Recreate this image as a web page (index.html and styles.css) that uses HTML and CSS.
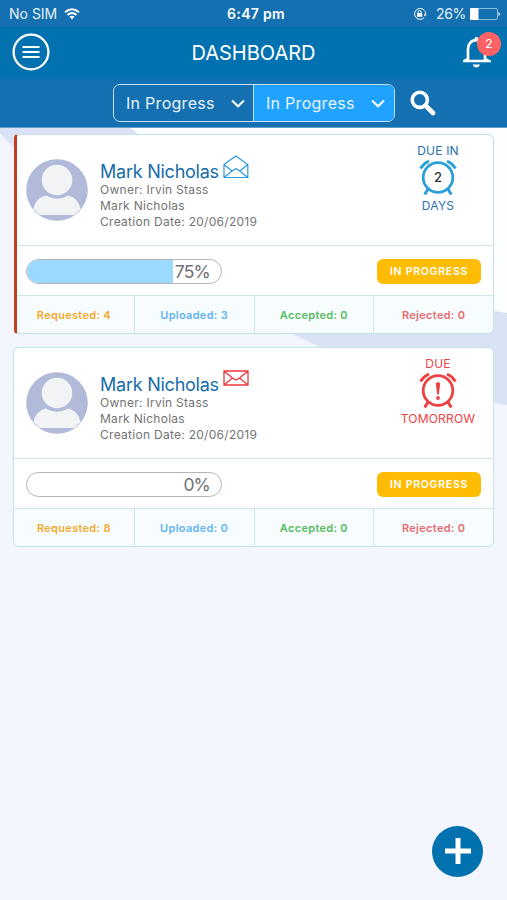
FILE: index.html
```html
<!DOCTYPE html>
<html lang="en">
<head>
<meta charset="utf-8">
<title>Dashboard</title>
<link rel="stylesheet" href="styles.css">
</head>
<body>
<div class="app">
  <svg class="backdrop" viewBox="0 0 507 900" aria-hidden="true">
    <path d="M120 127H507V313L480 306L320 340L160 250Z" fill="#fdfeff"/>
    <path d="M0 127H126Q133 128 140 136L160 160H30L14 148L0 133Z" fill="#dce2f5"/>
    <path d="M290 333Q400 300 480 309L507 313V405Q485 402 460 395L320 347Z" fill="#dae2f5"/>
  </svg>

  <header class="header">
    <div class="status">
      <div class="status-left"><span>No SIM</span>
        <svg width="16" height="12" viewBox="0 0 16 12" fill="none" stroke="#fff" stroke-width="1.9"><path d="M1 4.3Q8-1.6 15 4.3M3.5 7Q8 3.2 12.5 7"/><path d="M5.5 8.8Q8 6.8 10.5 8.8L8 11.5Z" fill="#fff" stroke="none"/></svg>
      </div>
      <span class="clock">6:47 pm</span>
      <div class="status-right">
        <svg class="lock" width="14" height="14" viewBox="0 0 14 14" fill="none" stroke="#fff"><path d="M11.6 3.7A5.5 5.5 0 1 0 11.2 10.6M12.2 4.5Q13 7 12 8.6"/><path d="M10.8 7.3h2.8l-1.5 2z" fill="#fff" stroke="none"/><rect x="4" y="6.1" width="5.2" height="3.7" fill="#fff" stroke="none"/><path d="M5.1 6V5a1.5 1.5 0 0 1 3 0v1"/></svg>
        <span>26%</span>
        <svg width="30" height="12" viewBox="0 0 30 12"><rect x=".5" y=".5" width="27" height="11" rx="1.5" fill="none" stroke="#8bbbdc"/><rect x="0" y="0" width="8.5" height="12" rx="1" fill="#fff"/><path d="M28.5 4Q30 5 30 6T28.5 8Z" fill="#fff"/></svg>
      </div>
    </div>
    <div class="nav">
      <button class="menu" aria-label="Menu"><svg width="38" height="38" viewBox="0 0 38 38" fill="none" stroke="#fff"><circle cx="19" cy="19" r="17.4" stroke-width="2.3"/><path d="M10.5 14h17M10.5 19h17M10.5 24h17" stroke-width="2"/></svg></button>
      <h1>DASHBOARD</h1>
      <button class="bell" aria-label="Notifications"><svg width="28" height="32" viewBox="0 0 28 32"><path d="M5 25V13.5C5 7.5 8.3 4.2 13.5 4.2S22 7.500 22 13.500V23L25.500 25H1.500L5 23" fill="none" stroke="#fff" stroke-width="2.700"/><path d="M11.500 4Q11.500 1 13.500 1T15.500 4ZM9.700 28.600H17Q16 31.600 13.300 31.600T9.700 28.600Z" fill="#fff"/></svg><span class="badge">2</span></button>
    </div>
    <div class="filters">
      <div class="segments">
        <button class="segment"><span>In Progress</span><svg width="14" height="9" viewBox="0 0 14 9"><path d="M1 1.500L7 7.300L13 1.500"/></svg></button>
        <button class="segment active"><span>In Progress</span><svg width="14" height="9" viewBox="0 0 14 9"><path d="M1 1.500L7 7.300L13 1.500"/></svg></button>
      </div>
      <button class="search" aria-label="Search"><svg width="26" height="26" viewBox="0 0 26 26" fill="none" stroke="#fff"><circle cx="9.800" cy="9.800" r="7.600" stroke-width="3.600"/><path d="M15.500 15.500L23 23" stroke-width="4.600" stroke-linecap="round"/></svg></button>
    </div>
  </header>

  <main class="list">
    <article class="card flagged">
      <div class="summary">
        <svg class="avatar" viewBox="0 0 62 62"><circle cx="31" cy="31" r="30.800" fill="#b1bad9"/><path d="M7.500 50C9 43 13 38 20 36.500Q31 43 42 36.500C49 38 53 43 54.500 50L48 56H14Z" fill="#f2f3f4"/><circle cx="31" cy="21" r="17.500" fill="#b1bad9"/><circle cx="31" cy="21" r="15.300" fill="#f2f3f4"/></svg>
        <div class="person">
          <div class="name-row"><h2>Mark Nicholas</h2><svg class="mail open" width="26" height="24" viewBox="0 0 26 24" fill="none" stroke="#2c98dc" stroke-width="1.200"><path d="M1 9.500L12.800 1L24.800 9.500V22.500H1ZM1 9.500L9 16L12.800 13.500L16.800 16L24.800 9.500M1 22.500L9 16M24.800 22.500L16.800 16"/></svg></div>
          <p>Owner: Irvin Stass</p><p>Mark Nicholas</p><p>Creation Date: 20/06/2019</p>
        </div>
        <div class="due"><span>DUE IN</span>
          <div class="alarm"><svg width="38" height="36" viewBox="0 0 38 36" fill="none" stroke="currentColor"><circle cx="19" cy="18.500" r="14.800" stroke-width="2.800"/><path d="M1.500 9.500Q4.500 4.500 10 2M36.500 9.500Q33.500 4.500 28 2" stroke-width="2.900"/><path d="M9 30L5.700 35.500M29 30L32.300 35.500" stroke-width="3"/></svg><b>2</b></div>
          <span>DAYS</span></div>
      </div>
      <div class="progress-row">
        <div class="progress"><div class="fill" style="width:75%"></div><span>75%</span></div>
        <span class="tag">IN PROGRESS</span>
      </div>
      <div class="stats"><span class="requested">Requested: 4</span><span class="uploaded">Uploaded: 3</span><span class="accepted">Accepted: 0</span><span class="rejected">Rejected: 0</span></div>
    </article>

    <article class="card">
      <div class="summary">
        <svg class="avatar" viewBox="0 0 62 62"><circle cx="31" cy="31" r="30.800" fill="#b1bad9"/><path d="M7.500 50C9 43 13 38 20 36.500Q31 43 42 36.500C49 38 53 43 54.500 50L48 56H14Z" fill="#f2f3f4"/><circle cx="31" cy="21" r="17.500" fill="#b1bad9"/><circle cx="31" cy="21" r="15.300" fill="#f2f3f4"/></svg>
        <div class="person">
          <div class="name-row"><h2>Mark Nicholas</h2><svg class="mail" width="26" height="16" viewBox="0 0 26 16" fill="none" stroke="#f0383d" stroke-width="1.300"><path d="M1 1H25V15H1ZM1 1L9.500 8L13 10L16.500 8L25 1M1 15L9.500 8M25 15L16.500 8"/></svg></div>
          <p>Owner: Irvin Stass</p><p>Mark Nicholas</p><p>Creation Date: 20/06/2019</p>
        </div>
        <div class="due urgent"><span>DUE</span>
          <div class="alarm"><svg width="38" height="36" viewBox="0 0 38 36" fill="none" stroke="currentColor"><circle cx="19" cy="18.500" r="14.800" stroke-width="2.800"/><path d="M1.500 9.500Q4.500 4.500 10 2M36.500 9.500Q33.500 4.500 28 2" stroke-width="2.900"/><path d="M9 30L5.700 35.500M29 30L32.300 35.500" stroke-width="3"/><path d="M16.800 11.500Q19 8.500 21.200 11.500L19.900 22.500H18.100Z" fill="currentColor" stroke="none"/><circle cx="19" cy="26" r="1.900" fill="currentColor" stroke="none"/></svg></div>
          <span>TOMORROW</span></div>
      </div>
      <div class="progress-row">
        <div class="progress"><div class="fill" style="width:0%"></div><span>0%</span></div>
        <span class="tag">IN PROGRESS</span>
      </div>
      <div class="stats"><span class="requested">Requested: 8</span><span class="uploaded">Uploaded: 0</span><span class="accepted">Accepted: 0</span><span class="rejected">Rejected: 0</span></div>
    </article>
  </main>
  <button class="add" aria-label="Add"><svg width="26" height="26" viewBox="0 0 26 26"><path d="M13 0V26M0 13H26" stroke="#fff" stroke-width="5"/></svg></button>
</div>
</body>
</html>
```
FILE: styles.css
```css
* { box-sizing: border-box; }
body { margin: 0; font-family: Inter, "Liberation Sans", sans-serif; }
button { border: 0; padding: 0; margin: 0; background: none; font: inherit; color: inherit; }
svg { display: block; flex: none; }
h1, h2, p { margin: 0; font-weight: 400; }
.app { position: relative; width: 507px; height: 900px; overflow: hidden; background: #f3f6fe; }
.backdrop { position: absolute; inset: 0; width: 507px; height: 900px; }

.header { position: relative; height: 128px; background: #1470b0; border-bottom: 1px solid #60a0cd; color: #fff; }
.status { height: 27px; display: grid; grid-template-columns: 1fr auto 1fr; align-items: center; padding: 1px 7px 0 9px; font-size: 14px; line-height: 26px; color: #e6f1f8; }
.status-left, .status-right { display: flex; align-items: center; }
.status-left { gap: 7px; }
.status-right { justify-content: flex-end; gap: 4px; }
.status-right span { letter-spacing: -.3px; }
.lock { margin-right: 5px; }
.clock { padding-left: 3px; font-weight: 600; letter-spacing: .3px; color: #fff; }
.nav { height: 52px; background: #0271b0; display: grid; grid-template-columns: 38px 1fr 38px; align-items: center; padding: 0 6px 0 12px; }
.nav h1 { padding-right: 6px; text-align: center; font-size: 20px; line-height: 52px; letter-spacing: 0; }
.menu { margin-top: -2px; }
.bell { position: relative; height: 32px; margin-top: -3px; }
.badge { position: absolute; left: 14px; top: -4px; width: 24px; height: 24px; border-radius: 50%; background: #fd6366; font-size: 12px; line-height: 24px; text-align: center; }
.filters { height: 48px; display: flex; align-items: center; padding-left: 113px; gap: 15px; }
.segments { display: flex; width: 282px; height: 38px; border: 1.500px solid #c2e0f6; border-radius: 7px; overflow: hidden; }
.segment { flex: 1; display: flex; align-items: center; justify-content: space-between; padding: 0 9px 0 12px; font-size: 16px; letter-spacing: .28px; color: #e9f4fc; }
.segment + .segment { border-left: 1px solid #c2e0f6; margin-left: -1px; }
.segment.active { background: #20a2ff; }
.segment svg { fill: none; stroke: #fff; stroke-width: 2; }

.list { position: relative; display: flex; flex-direction: column; gap: 13px; padding: 6px 13px 0; }
.card { height: 200px; border: 1px solid #c4e3eb; border-radius: 6px; background: #fff; overflow: hidden; box-shadow: 0 0 1px #c9e3ec; }
.card.flagged { border-left: 3px solid #c0401f; margin-left: 1px; border-radius: 4px 6px 6px 4px; }
.card.flagged .summary, .card.flagged .progress-row, .card.flagged .stats { margin-left: -3px; }
.summary { height: 110px; display: flex; padding: 0 15px 0 12px; }
.avatar { width: 62px; height: 62px; margin-top: 24px; }
.person { flex: 1; padding: 22px 0 0 12px; color: #747474; font-size: 12px; line-height: 16px; letter-spacing: .28px; }
.name-row { display: flex; height: 25px; gap: 5px; }
.name-row h2 { width: 118px; white-space: nowrap; font-size: 18px; line-height: 30px; color: #166ca9; letter-spacing: -.24px; }
.mail { margin-top: 0; }
.mail.open { margin-top: -2px; }
.due { width: 80px; display: flex; flex-direction: column; align-items: center; padding-top: 8px; color: #2970ad; font-size: 12px; line-height: 16px; letter-spacing: .2px; }
.alarm { position: relative; color: #2c9edb; margin: 0 0 3px; }
.alarm b { position: absolute; inset: 0; text-align: center; font-size: 13px; line-height: 37px; font-weight: 500; color: #333; }
.urgent, .urgent .alarm { color: #ed4244; }
.progress-row { height: 50px; border-top: 1px solid #cce7ec; display: flex; align-items: center; justify-content: space-between; padding: 1px 12px 0; }
.progress { position: relative; width: 196px; height: 25px; border: 1.500px solid #b5b5b8; border-radius: 13px; overflow: hidden; }
.fill { height: 100%; background: #9bd9fe; }
.progress span { position: absolute; right: 11px; top: 0; font-size: 17.500px; line-height: 23px; letter-spacing: -.8px; color: #707176; }
.tag { width: 104px; height: 25px; border-radius: 6px; background: #ffbc05; color: #fff; text-align: center; font-size: 10.500px; font-weight: 600; line-height: 25px; letter-spacing: .75px; }
.stats { height: 38px; display: grid; grid-template-columns: repeat(4, 1fr); border-top: 1px solid #cce7ec; background: #f7fcff; font-size: 11px; font-weight: 600; line-height: 38px; text-align: center; letter-spacing: .3px; }
.stats span + span { border-left: 1px solid #cce7ec; }
.requested { color: #f5aa2c; }
.uploaded { color: #62b4f4; }
.accepted { color: #56bd60; }
.rejected { color: #e76b70; }
.add { position: absolute; right: 24px; bottom: 23.500px; width: 51px; height: 51px; border-radius: 50%; background: #0271b0; display: grid; place-items: center; }
```
